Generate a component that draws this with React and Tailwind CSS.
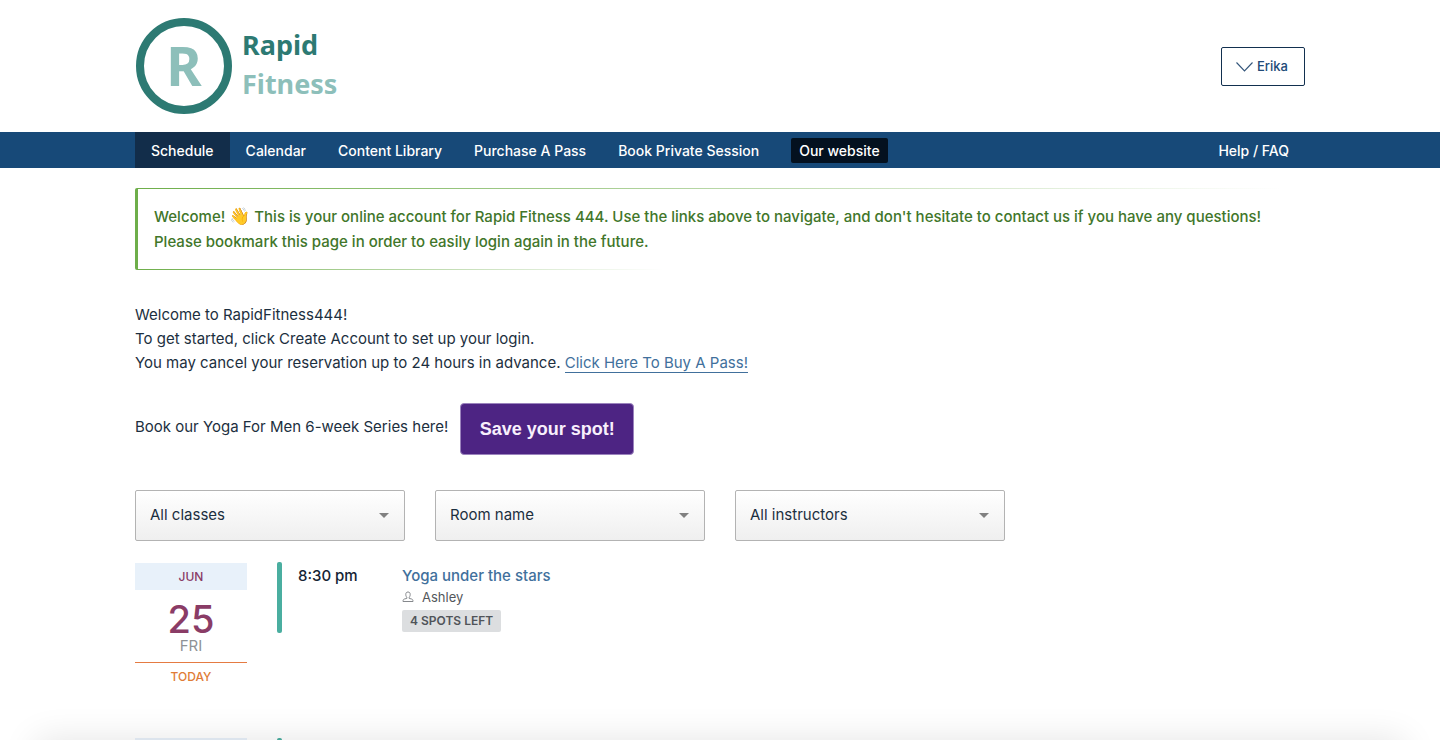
import React from "react";

const navItems = ["Schedule", "Calendar", "Content Library", "Purchase A Pass", "Book Private Session"];

const filters = [
  { id: "class-filter", label: "Class", value: "All classes" },
  { id: "room-filter", label: "Room", value: "Room name" },
  { id: "instructor-filter", label: "Instructor", value: "All instructors" },
];

function Logo() {
  return (
    <a href="#home" aria-label="Rapid Fitness" className="flex items-center gap-2.5 pl-px font-['Noto_Sans',sans-serif] font-bold">
      <span className="flex size-24 items-center justify-center rounded-full border-8 border-[#2d7a73] pb-0.5 text-[54px] leading-none text-[#8dbfba]">
        R
      </span>
      <span className="flex flex-col pb-1 text-[27px] leading-[39px]">
        <span className="text-[#2d7a73]">Rapid</span>
        <span className="text-[#8dbfba]">Fitness</span>
      </span>
    </a>
  );
}

function ChevronIcon() {
  return (
    <svg className="h-2.5 w-[17px]" viewBox="0 0 17 10" fill="none" stroke="#33557a" strokeWidth="1.1" aria-hidden="true">
      <path d="M0.5 0.5 L8.5 9 L16.5 0.5" />
    </svg>
  );
}

function PersonIcon() {
  return (
    <svg className="size-3" viewBox="0 0 12 12" fill="none" stroke="#85888c" strokeWidth="1" strokeLinejoin="round" aria-hidden="true">
      <path d="M6 1 C4.4 1 3.8 2 3.8 3.4 C3.8 4.8 4.2 5.6 4.8 6.1 V7.4 L2.4 8 C1.4 8.3 1 9 1 10.5 H11 C11 9 10.6 8.3 9.6 8 L7.2 7.4 V6.1 C7.8 5.6 8.2 4.8 8.2 3.4 C8.2 2 7.6 1 6 1 Z" />
    </svg>
  );
}

function FilterSelect({ id, label, value }) {
  return (
    <div className="relative w-[270px]">
      <select
        id={id}
        aria-label={label}
        className="h-[51px] w-full appearance-none rounded-xs border border-[#b3b3b3] bg-linear-to-b from-white to-[#efefef] pr-9 pl-3.5 text-[15px] text-[#1c2f40]"
      >
        <option>{value}</option>
      </select>
      <svg className="pointer-events-none absolute top-[23px] right-4 h-[5px] w-2.5" viewBox="0 0 10 5" fill="#808080" aria-hidden="true">
        <path d="M0 0 H10 L5 5 Z" />
      </svg>
    </div>
  );
}

export default function App() {
  return (
    <div className="h-screen overflow-hidden bg-white font-['Inter','Liberation_Sans',sans-serif] text-[15px] text-[#1c2f40]">
      <header>
        <div className="mx-auto flex h-[132px] max-w-[1170px] items-center justify-between">
          <Logo />
          <button
            type="button"
            className="flex h-[39px] items-center gap-1 rounded-xs border border-[#12304f] px-3.5 pt-0.5 pr-4 text-[13px] font-medium text-[#204a77]"
          >
            <ChevronIcon />
            Erika
          </button>
        </div>
        <nav className="bg-[#174978] text-[14px] font-medium text-white">
          <div className="mx-auto flex h-9 max-w-[1170px] items-stretch">
            {navItems.map((item, i) => (
              <a key={item} href="#nav" className={i === 0 ? "flex items-center bg-[#122d4a] px-4 pt-px" : "flex items-center px-4 pt-px"}>
                {item}
              </a>
            ))}
            <span className="flex items-center px-4">
              <a href="#website" className="rounded-xs bg-[#04111f] px-2 py-0.5 leading-[21px]">
                Our website
              </a>
            </span>
            <a href="#help" className="ml-auto flex items-center px-4 pt-px">
              Help / FAQ
            </a>
          </div>
        </nav>
      </header>

      <main className="mx-auto max-w-[1170px] pt-5">
        <section className="rounded-xs border-l-3 border-[#6eae4a]">
          <div className="h-px w-[98%] bg-linear-to-r from-[#6eae4a] to-transparent" />
          <div className="px-4 py-[15px] leading-[25px] font-medium text-[#41762a]">
            <p>
              Welcome! <span className="text-[17px] leading-none">👋</span> This is your online account for Rapid Fitness
              444. Use the links above to navigate, and don't hesitate to contact us if you have any questions!
            </p>
            <p>Please bookmark this page in order to easily login again in the future.</p>
          </div>
          <div className="h-px w-[45%] bg-linear-to-r from-[#6eae4a] to-transparent" />
        </section>

        <section className="mt-[33px] leading-6">
          <p>Welcome to RapidFitness444!</p>
          <p>To get started, click Create Account to set up your login.</p>
          <p>
            You may cancel your reservation up to 24 hours in advance.{" "}
            <a href="#passes" className="border-b border-[#41709c] text-[#41709c]">
              Click Here To Buy A Pass!
            </a>
          </p>
        </section>

        <div className="mt-7 flex items-center gap-3">
          <p className="pb-1">Book our Yoga For Men 6-week Series here!</p>
          <button
            type="button"
            className="h-[52px] w-[174px] rounded-sm border border-[#9b83bd] bg-[#4d2483] font-['Liberation_Sans',Arial,sans-serif] text-[18px] font-bold text-[#f8effc]"
          >
            Save your spot!
          </button>
        </div>

        <div className="mt-[35px] flex gap-[30px]">
          {filters.map((f) => (
            <FilterSelect key={f.id} {...f} />
          ))}
        </div>

        <div className="mt-[21px] flex flex-col">
          <article className="flex h-44 items-start">
            <div className="mt-px flex w-28 flex-col items-center">
              <div className="w-full bg-[#e8f1fa] text-center text-[12px] leading-[27px] font-medium text-[#8a3c66]">JUN</div>
              <div className="mt-2.5 text-[38px] leading-[38px] font-medium text-[#8a3c66]">25</div>
              <div className="w-full border-b border-[#e57b42] pb-2 text-center leading-4 text-[#8f9296]">FRI</div>
              <div className="mt-1 text-[12px] leading-5 font-medium text-[#e07c36]">TODAY</div>
            </div>
            <div className="ml-[30px] flex min-h-[71px] gap-4">
              <div className="w-[5px] rounded-xs bg-[#4aaea0]" />
              <div className="w-[88px] pt-0.5 leading-6 font-medium text-[#152534]">8:30 pm</div>
              <div>
                <h2 className="pt-0.5 leading-6 font-medium">
                  <a href="#class" className="text-[#41709c]">
                    Yoga under the stars
                  </a>
                </h2>
                <p className="flex items-center gap-2 text-[13px] leading-[18px] text-[#54575b]">
                  <PersonIcon />
                  Ashley
                </p>
                <span className="mt-1 inline-block rounded-xs bg-[#dcdee0] px-2 text-[12px] leading-[22px] font-semibold text-[#505459]">
                  4 SPOTS LEFT
                </span>
              </div>
            </div>
          </article>
          <article className="flex h-44 items-start" aria-hidden="true">
            <div className="h-[27px] w-28 bg-[#e8f1fa]" />
            <div className="ml-[30px] h-[71px] w-[5px] rounded-xs bg-[#4aaea0]" />
          </article>
        </div>
      </main>

      <div className="pointer-events-none fixed inset-x-9 -bottom-20 h-20 shadow-[0_0_36px_rgba(0,0,0,0.11)]" />
    </div>
  );
}
